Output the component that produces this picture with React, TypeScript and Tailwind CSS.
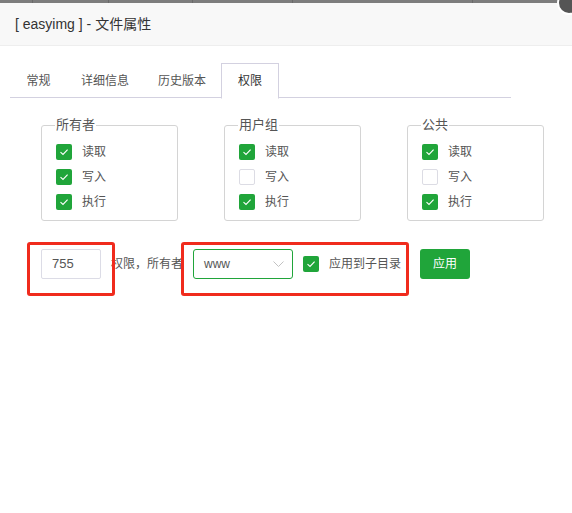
import { useState } from 'react';

const font = { fontFamily: '"Liberation Sans", "Noto Sans CJK SC", sans-serif' };

function Box({ on }: { on: boolean }) {
  if (!on) return <span className="block w-4 h-4 rounded-[2px] border border-[#dcdce4] bg-white" />;
  return (
    <span className="flex items-center justify-center w-4 h-4 rounded-[2px] bg-[#20a53a]">
      <svg width="10" height="8" viewBox="0 0 10 8" fill="none">
        <path d="M1.5 4.2 L4 6.5 L8.6 1.6" stroke="#fff" strokeWidth="1.1" />
      </svg>
    </span>
  );
}

function Group({ title, perms, left }: { title: string; perms: boolean[]; left: string }) {
  const names = ['读取', '写入', '执行'];
  return (
    <fieldset className={`w-[137px] h-[104px] border border-[#d4d4d4] rounded-[3px] pl-[14px] pt-[2px] ${left}`}>
      <legend className="px-[1px] text-[13px] leading-[16px] text-[#555] -ml-[1px]">{title}</legend>
      <div className="flex flex-col gap-[9px] mt-[9px]">
        {perms.map((p, i) => (
          <div key={i} className="flex items-center h-4 gap-[10px]">
            <Box on={p} />
            <span className="text-[12px] text-[#555]">{names[i]}</span>
          </div>
        ))}
      </div>
    </fieldset>
  );
}

export default function App() {
  const [tab] = useState(3);
  const tabs = [
    { name: '常规', w: 'w-[57px]' },
    { name: '详细信息', w: 'w-[76px]' },
    { name: '历史版本', w: 'w-[78px]' },
    { name: '权限', w: 'w-[58px]' },
  ];

  return (
    <div className="relative w-[572px] h-[513px] bg-white overflow-hidden" style={font}>
      {/* strip of the page behind */}
      <div className="h-[3px] bg-[#7d7d7d] flex">
        <div className="w-[33px] border-r border-[#6a6a6a]" />
        <div className="w-[76px] border-r border-[#6a6a6a]" />
        <div className="w-[84px] border-r border-[#6a6a6a]" />
        <div className="w-[100px] border-r border-[#6a6a6a]" />
        <div className="w-[180px] border-r border-[#6a6a6a]" />
      </div>
      <div className="absolute right-[-9px] top-[-9px] w-[24px] h-[24px] rounded-full bg-[#555] border-2 border-white" />

      {/* header */}
      <div className="h-[43px] bg-[#f8f8f8] border-b border-[#eee] flex items-center pl-[15px] text-[14px] text-[#333]">
        [ easyimg ] - 文件属性
      </div>

      {/* tabs */}
      <div className="mt-[17px] mx-[10px] w-[501px] flex h-[35px] border-b border-[#d3d1e0]">
        {tabs.map((t, i) => (
          <div
            key={t.name}
            className={`${t.w} h-[35px] flex items-center justify-center text-[12px] whitespace-nowrap ${
              i === tab
                ? 'bg-white border border-[#d3d1e0] border-b-white mb-[-1px] h-[36px] text-[#333]'
                : 'text-[#555]'
            }`}
          >
            {t.name}
          </div>
        ))}
      </div>

      {/* groups */}
      <div className="flex mt-[19px] pl-[41px]">
        <Group title="所有者" perms={[true, true, true]} left="" />
        <Group title="用户组" perms={[true, false, true]} left="ml-[46px]" />
        <Group title="公共" perms={[true, false, true]} left="ml-[46px]" />
      </div>

      {/* bottom row */}
      <div className="flex items-center mt-[28px] pl-[41px] h-[30px]">
        <div className="w-[60px] h-[30px] border border-[#dcdce6] rounded-[2px] flex items-center pl-[10px] text-[13px] text-[#555]">
          755
        </div>
        <span className="ml-[10px] text-[12px] text-[#555]">权限，所有者</span>
        <div className="ml-[10px] w-[100px] h-[30px] border border-[#20a53a] rounded-[3px] flex items-center justify-between pl-[10px] pr-[8px] text-[12px] text-[#555]">
          www
          <svg width="11" height="7" viewBox="0 0 11 7" fill="none">
            <path d="M0.5 0.5 L5.5 5.5 L10.5 0.5" stroke="#c2c2c2" strokeWidth="1" />
          </svg>
        </div>
        <div className="ml-[10px] flex items-center gap-[10px]">
          <Box on />
          <span className="text-[12px] text-[#555]">应用到子目录</span>
        </div>
        <button className="ml-[19px] w-[50px] h-[30px] rounded-[3px] bg-[#20a53a] text-white text-[12px]">
          应用
        </button>
      </div>

      {/* annotation boxes */}
      <div className="absolute left-[27px] top-[242px] w-[88px] h-[54px] border-[3px] border-[#f02b1d] rounded-[3px]" />
      <div className="absolute left-[181px] top-[242px] w-[228px] h-[54px] border-[3px] border-[#f02b1d] rounded-[3px]" />
    </div>
  );
}
